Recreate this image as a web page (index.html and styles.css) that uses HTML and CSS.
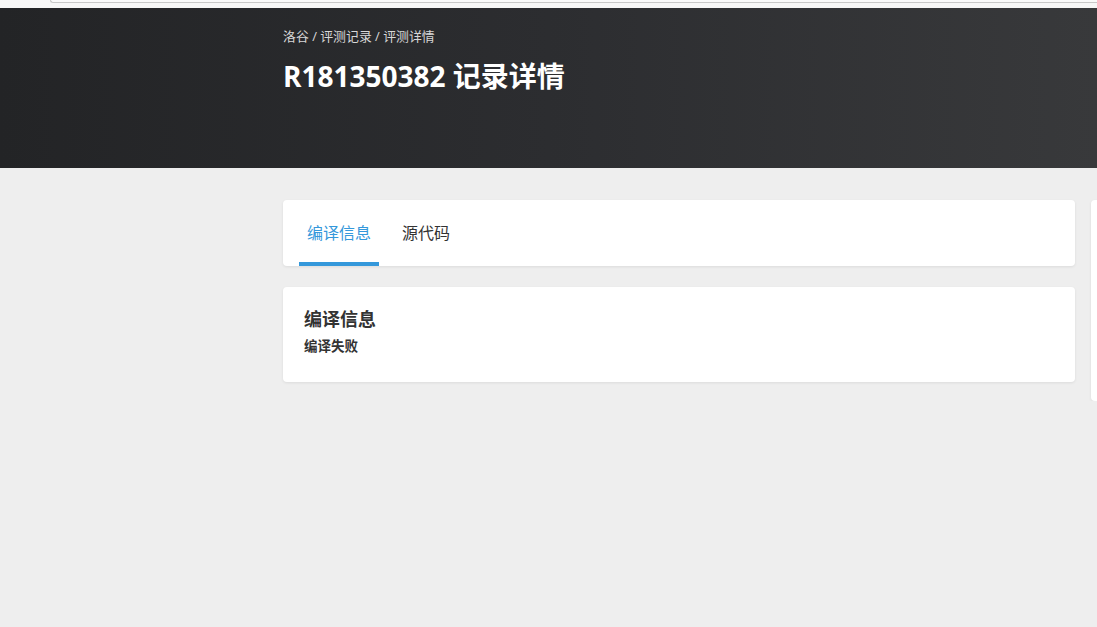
FILE: index.html
```html
<!DOCTYPE html>
<html lang="zh-CN">
<head>
<meta charset="utf-8">
<title>R181350382 记录详情</title>
<link rel="stylesheet" href="styles.css">
</head>
<body>
<div class="topstrip"><div class="topbar"></div></div>
<header class="header">
  <div class="header-inner">
    <div class="breadcrumb">洛谷 / 评测记录 / 评测详情</div>
    <h1 class="title">R181350382 记录详情</h1>
  </div>
</header>
<main class="content">
  <div class="main-col">
    <div class="card tabs">
      <div class="tab active">编译信息</div>
      <div class="tab">源代码</div>
    </div>
    <div class="card info">
      <h2 class="info-title">编译信息</h2>
      <div class="info-text">编译失败</div>
    </div>
  </div>
  <aside class="side-col">
    <div class="card side-card"></div>
  </aside>
</main>
</body>
</html>
```
FILE: styles.css
```css
html, body {
  margin: 0;
  padding: 0;
}
body {
  background: #eeeeee;
  font-family: "Open Sans", "Noto Sans CJK SC", sans-serif;
  color: #333;
  overflow: hidden;
  min-height: 627px;
}
.topstrip {
  height: 8px;
  background: #f7f7f7;
  overflow: hidden;
}
.topbar {
  margin-left: 50px;
  height: 2px;
  border-left: 1px solid #c8c8c8;
  border-bottom: 1px solid #c8c8c8;
  border-bottom-left-radius: 8px;
  background: #fafafa;
}
.header {
  height: 160px;
  background: linear-gradient(90deg, #232426 0%, #2c2d30 50%, #38393b 100%);
  box-sizing: border-box;
  padding: 20px 0 0 283px;
}
.breadcrumb {
  font-size: 12.9px;
  line-height: 17px;
  color: #d8d8d8;
}
.title {
  margin: 13px 0 0;
  font-size: 28px;
  line-height: 36px;
  font-weight: 700;
  color: #fff;
}
.content {
  display: grid;
  grid-template-columns: 792px 1fr;
  column-gap: 16px;
  padding: 32px 0 0 283px;
  align-items: start;
  overflow: hidden;
}
.main-col {
  display: flex;
  flex-direction: column;
  gap: 21px;
}
.card {
  background: #fff;
  border-radius: 4px;
  box-shadow: 0 1px 3px rgba(0, 0, 0, 0.08);
}
.tabs {
  display: flex;
  height: 66px;
  box-sizing: border-box;
  padding-left: 16px;
  gap: 15px;
  overflow: hidden;
}
.tab {
  padding: 0 8px;
  font-size: 16px;
  line-height: 66px;
  color: #333;
  position: relative;
}
.tab.active {
  color: #3498db;
}
.tab.active::after {
  content: "";
  position: absolute;
  left: 0;
  right: 0;
  bottom: 0;
  height: 4px;
  background: #3498db;
}
.info {
  padding: 19px 20px 25px 21px;
}
.info-title {
  margin: 0;
  font-size: 18px;
  line-height: 27px;
  font-weight: 700;
  color: #333;
}
.info-text {
  margin-top: 3px;
  font-size: 13.5px;
  line-height: 21px;
  font-weight: 700;
  color: #333;
}
.side-card {
  width: 300px;
  height: 201px;
}
```
